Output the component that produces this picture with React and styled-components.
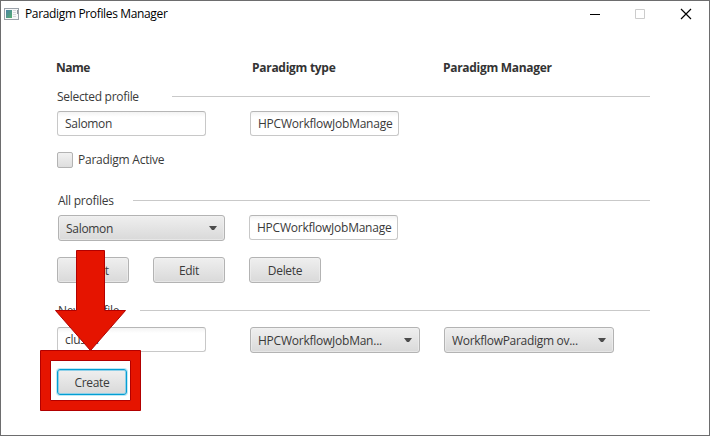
import React from "react";
import styled, { createGlobalStyle } from "styled-components";

const GlobalStyle = createGlobalStyle`
  * { box-sizing: border-box; }
  body { margin: 0; background: #fff; overflow: hidden; }
`;

const Window = styled.div`
  position: relative;
  width: 710px;
  height: 436px;
  border: 1px solid #6d6d6e;
  background: #fff;
  color: #3a3a3a;
  font: 12px/16px "Open Sans", "Noto Sans", sans-serif;
`;

const TitleBar = styled.header`
  display: flex;
  align-items: center;
  height: 25px;
  padding: 0 17px 0 3px;
  color: #000;
`;

const AppIcon = styled.svg`
  width: 16px;
  height: 14px;
  margin-right: 5px;
`;

const WindowControls = styled.div`
  display: grid;
  grid-template-columns: 45px 46px 12px;
  margin-left: auto;
`;

const ControlIcon = styled.svg`
  width: 12px;
  height: 12px;
`;

const Text = styled.span`
  white-space: nowrap;
  letter-spacing: ${({ $tracking = -0.3 }) => $tracking}px;
`;

const Form = styled.main`
  display: flex;
  flex-direction: column;
  padding-left: 56px;
`;

const HeadingRow = styled.div`
  display: grid;
  grid-template-columns: 196px 191px 150px;
  margin: 34px 0 0 -1px;
  color: #333;
  font-weight: 700;
`;

const Section = styled.div`
  display: flex;
  align-items: center;
  width: 593px;
  height: 16px;
  margin-top: ${({ $top }) => $top}px;
  padding-left: ${({ $indent = 0 }) => $indent}px;
`;

const Rule = styled.i`
  width: ${({ $width }) => $width}px;
  height: 1px;
  margin: 0 0 1px auto;
  background: #c9c9c9;
`;

const ControlRow = styled.div`
  display: flex;
  gap: ${({ $gap = 24 }) => $gap}px;
  margin-top: ${({ $top }) => $top}px;
  padding-left: ${({ $indent = 0 }) => $indent}px;
`;

const Field = styled.div`
  width: 149px;
  height: 25px;
  padding: 4px 6px 0 7px;
  border: 1px solid #c8c8c8;
  border-top-color: #b6b6b6;
  border-radius: 3px;
  background: linear-gradient(#f3f3f3, #fff 5px);
`;

const Button = styled.button`
  width: ${({ $width = 72 }) => $width}px;
  height: 26px;
  padding: 1px 0 0;
  border: 1px solid ${({ $focused }) => ($focused ? "#039ed3" : "#b3b3b3")};
  border-radius: 3px;
  background: linear-gradient(#efefef, #d9d9d9);
  box-shadow: ${({ $focused }) =>
    $focused ? "inset 0 0 0 1px #8fd0e8, 0 0 0 1px #bfe8f5" : "inset 0 0 0 1px #f2f2f288"};
  color: inherit;
  font: inherit;
`;

const Combo = styled.div`
  display: flex;
  align-items: center;
  justify-content: space-between;
  width: ${({ $width = 170 }) => $width}px;
  height: 26px;
  padding: 1px 7px 0;
  border: 1px solid #b3b3b3;
  border-radius: 3px;
  background: linear-gradient(#efefef, #d9d9d9);
  box-shadow: inset 0 0 0 1px #f2f2f288;
`;

const Arrow = styled.svg`
  width: 8px;
  height: 4px;
  margin-bottom: 2px;
`;

const CheckLabel = styled.div`
  display: flex;
  align-items: center;
  gap: 5px;
  margin-top: 16px;
`;

const Checkbox = styled.i`
  width: 16px;
  height: 16px;
  border: 1px solid #b3b3b3;
  border-radius: 2px;
  background: linear-gradient(#f1f1f1, #dedede);
`;

const Annotation = styled.svg`
  position: absolute;
  left: 39px;
  top: 249px;
  width: 101px;
  height: 161px;
  pointer-events: none;
`;

function Select({ label, width, tracking }) {
  return (
    <Combo $width={width}>
      <Text $tracking={tracking}>{label}</Text>
      <Arrow viewBox="0 0 8 4">
        <path d="M0 0H8L5 4H3Z" fill="#4c4c4c" />
      </Arrow>
    </Combo>
  );
}

function TextField({ value, tracking }) {
  return (
    <Field>
      <Text $tracking={tracking}>{value}</Text>
    </Field>
  );
}

export default function App() {
  return (
    <>
      <GlobalStyle />
      <Window>
        <TitleBar>
          <AppIcon viewBox="0 0 16 14" shapeRendering="crispEdges">
            <defs>
              <linearGradient id="pane" x1="0" y1="0" x2="1" y2="1">
                <stop stopColor="#4a83a6" />
                <stop offset="1" stopColor="#55ad70" />
              </linearGradient>
            </defs>
            <path d="M0 1H15V13H0Z" fill="#9aa1a9" />
            <path d="M1 2H14V12H1Z" fill="#f7f8f9" />
            <path d="M2 3H8V11H2Z" fill="url(#pane)" />
            <path d="M9 3.5H12M9 5.5H12M9 7.5H12M9 9.5H12" stroke="#d5d8db" />
            <path d="M13 3H14V7H13Z" fill="#8b929b" />
          </AppIcon>
          <Text $tracking={-0.35}>Paradigm Profiles Manager</Text>
          <WindowControls>
            <ControlIcon viewBox="0 0 12 12">
              <path d="M1 6.5H11" stroke="#000" />
            </ControlIcon>
            <ControlIcon viewBox="0 0 12 12">
              <path d="M1.5 1.5H10.5V10.5H1.5Z" fill="none" stroke="#ccc" />
            </ControlIcon>
            <ControlIcon viewBox="0 0 12 12">
              <path d="M1 1L11 11M11 1L1 11" stroke="#000" strokeWidth="1.2" />
            </ControlIcon>
          </WindowControls>
        </TitleBar>

        <Form>
          <HeadingRow>
            <Text $tracking={-0.5}>Name</Text>
            <Text $tracking={-0.28}>Paradigm type</Text>
            <Text $tracking={-0.3}>Paradigm Manager</Text>
          </HeadingRow>

          <Section $top={13}>
            <Text>Selected profile</Text>
            <Rule $width={478} />
          </Section>
          <ControlRow $top={6} $gap={44}>
            <TextField value="Salomon" />
            <TextField value="HPCWorkflowJobManage" tracking={-0.24} />
          </ControlRow>
          <CheckLabel>
            <Checkbox />
            <Text $tracking={-0.25}>Paradigm Active</Text>
          </CheckLabel>

          <Section $top={25} $indent={1}>
            <Text $tracking={-0.25}>All profiles</Text>
            <Rule $width={517} />
          </Section>
          <ControlRow $top={6} $indent={1}>
            <Select label="Salomon" width={167} />
            <TextField value="HPCWorkflowJobManage" tracking={-0.24} />
          </ControlRow>
          <ControlRow $top={16}>
            <Button>
              <Text>Select</Text>
            </Button>
            <Button>
              <Text>Edit</Text>
            </Button>
            <Button>
              <Text>Delete</Text>
            </Button>
          </ControlRow>

          <Section $top={20} $indent={1}>
            <Text>New profile</Text>
            <Rule $width={510} />
          </Section>
          <ControlRow $top={8}>
            <TextField value="cluster" />
            <ControlRow $top={0} $indent={20}>
              <Select label="HPCWorkflowJobMan..." tracking={-0.24} />
              <Select label="WorkflowParadigm ov..." tracking={-0.3} />
            </ControlRow>
          </ControlRow>
          <ControlRow $top={16}>
            <Button $width={70} $focused>
              <Text>Create</Text>
            </Button>
          </ControlRow>
        </Form>

        <Annotation viewBox="0 0 101 161">
          <g fill="#e51400" stroke="#b20000">
            <path
              fillRule="evenodd"
              d="M.5 100.5H100.5V160.5H.5ZM10.5 110.5V150.5H90.5V110.5Z"
            />
            <path d="M36.5 .5H64.5V60.5H85.5L50.5 100.5L15.5 60.5H36.5Z" />
          </g>
        </Annotation>
      </Window>
    </>
  );
}
